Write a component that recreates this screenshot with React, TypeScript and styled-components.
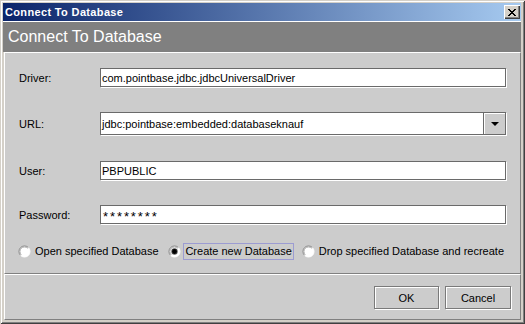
import React from 'react';
import styled, { createGlobalStyle } from 'styled-components';

const GlobalStyle = createGlobalStyle`
  html, body {
    margin: 0;
    padding: 0;
    background: #d4d0c8;
  }
  body {
    font-family: "Liberation Sans", Arial, sans-serif;
  }
  * {
    box-sizing: border-box;
  }
`;

const Window = styled.div`
  width: 525px;
  height: 324px;
  display: flex;
  flex-direction: column;
  padding: 3px 4px 4px 3px;
  background: #d4d0c8;
  box-shadow: inset 1px 1px 0 #d4d0c8, inset -1px -1px 0 #404040, inset 2px 2px 0 #ffffff,
    inset -2px -2px 0 #808080;
`;

const TitleBar = styled.div`
  height: 18px;
  display: flex;
  align-items: center;
  justify-content: space-between;
  padding: 0 1px 0 2px;
  background: linear-gradient(to right, #0a246a, #a6caf0);
`;

const TitleText = styled.span`
  color: #ffffff;
  font-size: 11px;
  font-weight: bold;
  letter-spacing: 0.35px;
`;

const CloseButton = styled.div`
  width: 16px;
  height: 14px;
  display: flex;
  align-items: center;
  justify-content: center;
  background: #d4d0c8;
  box-shadow: inset 1px 1px 0 #ffffff, inset -1px -1px 0 #404040, inset -2px -2px 0 #808080;
`;

const HeaderBand = styled.div`
  height: 31px;
  display: flex;
  align-items: center;
  padding-left: 5px;
  border-top: 1px solid #ffffff;
  background: #808080;
  color: #ffffff;
  font-size: 16px;
`;

const Panel = styled.div<{ $height: number }>`
  height: ${({ $height }) => $height}px;
  margin-left: 1px;
  background: #cccccc;
  border-top: 1px solid #ffffff;
  border-left: 1px solid #ffffff;
  border-bottom: 1px solid #808080;
  border-right: 1px solid #808080;
`;

const FormPanel = styled(Panel)`
  display: flex;
  flex-direction: column;
  padding: 15px 14px 0 14px;
`;

const ButtonBar = styled(Panel)`
  display: flex;
  justify-content: flex-end;
  align-items: flex-start;
  gap: 6px;
  padding: 11px 9px 0 0;
`;

const FieldRow = styled.div<{ $top: number }>`
  display: flex;
  align-items: center;
  margin-top: ${({ $top }) => $top}px;
`;

const Label = styled.div`
  width: 81px;
  font-size: 11px;
  color: #000000;
`;

const TextBox = styled.div<{ $height: number }>`
  flex: 1;
  height: ${({ $height }) => $height}px;
  display: flex;
  align-items: center;
  padding-left: 1px;
  background: #ffffff;
  border: 1px solid #6a6a6a;
  box-shadow: 1px 1px 0 #ffffff;
  font-size: 11px;
  color: #000000;
  white-space: nowrap;
`;

const ComboText = styled.span`
  flex: 1;
`;

const Masked = styled.span`
  letter-spacing: 1.9px;
  font-size: 13px;
  padding: 4px 0 0 1px;
`;

const ArrowButton = styled.div`
  width: 22px;
  align-self: stretch;
  display: flex;
  align-items: center;
  justify-content: center;
  background: #cccccc;
  border-left: 1px solid #6a6a6a;
  box-shadow: inset 1px 1px 0 #ffffff;
`;

const RadioRow = styled.div`
  height: 16px;
  margin: 19px 0 0 -1px;
  display: flex;
  align-items: center;
  justify-content: space-between;
`;

const RadioItem = styled.div`
  display: flex;
  align-items: center;
  gap: 2px;
`;

const RadioLabel = styled.span<{ $focused?: boolean }>`
  padding: 1px 1px;
  border: 1px solid ${({ $focused }) => ($focused ? '#9c9cd2' : 'transparent')};
  font-size: 11px;
  color: #000000;
  line-height: 13px;
`;

const PushButton = styled.div<{ $width: number }>`
  width: ${({ $width }) => $width}px;
  height: 23px;
  display: flex;
  align-items: center;
  justify-content: center;
  background: #cccccc;
  border: 1px solid #7a7a7a;
  box-shadow: 1px 1px 0 #ffffff, inset 1px 1px 0 #ffffff;
  font-size: 11px;
  color: #000000;
`;

const X_ROWS = ['11000011', '01100110', '00111100', '00011000', '00111100', '01100110', '11000011'];

const CloseGlyph = () => (
  <svg width="8" height="7" viewBox="0 0 8 7" shapeRendering="crispEdges">
    {X_ROWS.map((row, y) =>
      row.split('').map((c, x) => (c === '1' ? <rect key={`${x}-${y}`} x={x} y={y} width="1" height="1" fill="#000" /> : null))
    )}
  </svg>
);

const RadioCircle = ({ checked }: { checked?: boolean }) => (
  <svg width="13" height="13" viewBox="0 0 13 13">
    <circle cx="6.5" cy="6.5" r="5.5" fill="#ffffff" />
    <path d="M2.6 10.4 A5.5 5.5 0 0 1 10.4 2.6" fill="none" stroke="#808080" strokeWidth="1" />
    <path d="M10.4 2.6 A5.5 5.5 0 0 1 2.6 10.4" fill="none" stroke="#ffffff" strokeWidth="1" />
    <path d="M3.3 9.7 A4.5 4.5 0 0 1 9.7 3.3" fill="none" stroke="#b0b0b0" strokeWidth="1" />
    {checked && <circle cx="6.5" cy="6.5" r="3.2" fill="#555555" />}
    {checked && <circle cx="6.5" cy="6.5" r="2.4" fill="#000000" />}
  </svg>
);

const DownArrow = () => (
  <svg width="8" height="4" viewBox="0 0 8 4">
    <polygon points="0,0 8,0 4,4" fill="#000000" />
  </svg>
);

const fields = [
  { label: 'Driver:', value: 'com.pointbase.jdbc.jdbcUniversalDriver', top: 0, height: 19 },
  { label: 'URL:', value: 'jdbc:pointbase:embedded:databaseknauf', top: 25, height: 23, combo: true },
  { label: 'User:', value: 'PBPUBLIC', top: 26, height: 19 },
  { label: 'Password:', value: '********', top: 25, height: 19, masked: true },
];

const options = [
  { label: 'Open specified Database' },
  { label: 'Create new Database', checked: true },
  { label: 'Drop specified Database and recreate' },
];

export default function App() {
  return (
    <>
      <GlobalStyle />
      <Window>
        <TitleBar>
          <TitleText>Connect To Database</TitleText>
          <CloseButton>
            <CloseGlyph />
          </CloseButton>
        </TitleBar>
        <HeaderBand>Connect To Database</HeaderBand>
        <FormPanel $height={222}>
          {fields.map((f) => (
            <FieldRow key={f.label} $top={f.top}>
              <Label>{f.label}</Label>
              <TextBox $height={f.height}>
                {f.combo ? (
                  <>
                    <ComboText>{f.value}</ComboText>
                    <ArrowButton>
                      <DownArrow />
                    </ArrowButton>
                  </>
                ) : f.masked ? (
                  <Masked>{f.value}</Masked>
                ) : (
                  f.value
                )}
              </TextBox>
            </FieldRow>
          ))}
          <RadioRow>
            {options.map((o) => (
              <RadioItem key={o.label}>
                <RadioCircle checked={o.checked} />
                <RadioLabel $focused={o.checked}>{o.label}</RadioLabel>
              </RadioItem>
            ))}
          </RadioRow>
        </FormPanel>
        <ButtonBar $height={46}>
          <PushButton $width={65}>OK</PushButton>
          <PushButton $width={66}>Cancel</PushButton>
        </ButtonBar>
      </Window>
    </>
  );
}
